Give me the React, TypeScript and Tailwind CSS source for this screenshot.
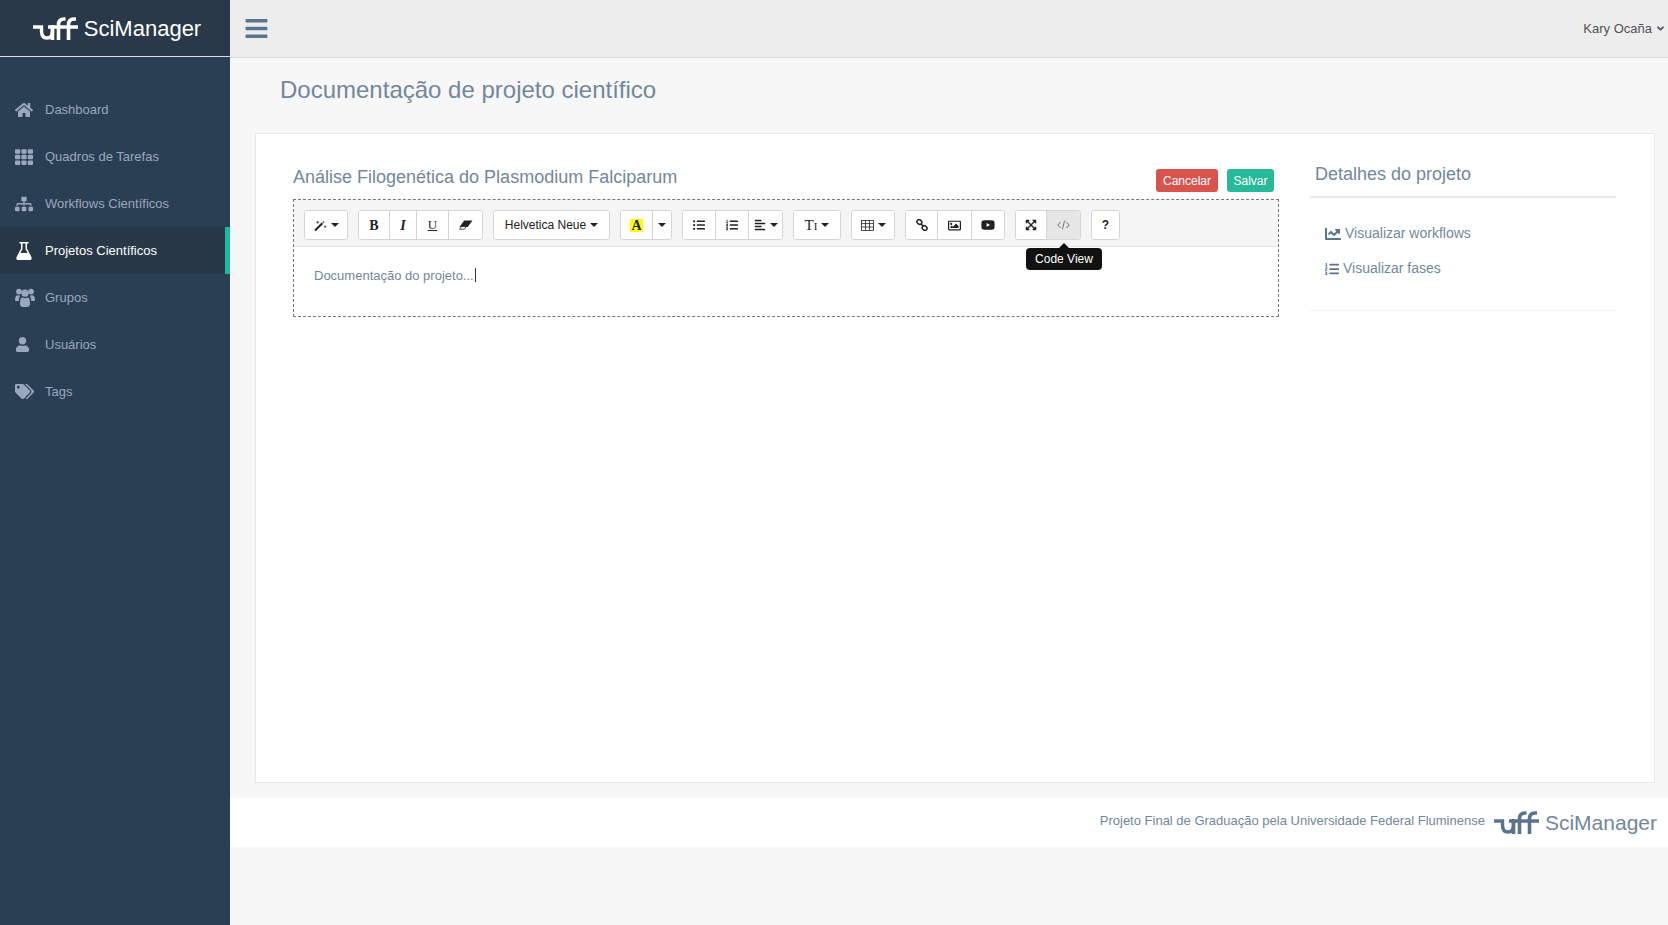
import React from 'react';
import {
  FaHome, FaTh, FaSitemap, FaUser, FaTags, FaBars, FaChartLine, FaListOl, FaListUl,
  FaAlignLeft, FaRegImage, FaYoutube, FaExpandArrowsAlt, FaAngleDown,
} from 'react-icons/fa';

const UffLogo = ({ className }: { className: string }) => (
  <svg viewBox="0 0 45 23" className={className} fill="none" stroke="currentColor" strokeWidth="3.6">
    <path d="M0 10H8.5V14C8.5 18.5 10.5 21 14 21C17.5 21 19.5 18.5 19.5 14V8M15 10H45" strokeWidth="3.4" />
    <path d="M19.5 8V23M25.5 23V8C25.5 3.8 27.5 2 31 2H32.5M35.5 23V8C35.5 3.8 37.5 2 41 2H43" />
  </svg>
);

const FlaskIcon = ({ className }: { className?: string }) => (
  <svg viewBox="0 0 16 18" className={className} fill="currentColor">
    <path d="M3.5 0H12.5V1.6H11V6.5L15.5 15.2C16.2 16.6 15.3 18 13.8 18H2.2C0.7 18 -0.2 16.6 0.5 15.2L5 6.5V1.6H3.5ZM6.5 1.6V7L4.4 11H11.6L9.5 7V1.6Z" fillRule="evenodd" />
  </svg>
);

const UsersIcon = ({ className }: { className?: string }) => (
  <svg viewBox="0 0 20 19" className={className} fill="currentColor">
    <circle cx="4" cy="3.6" r="2.9" />
    <circle cx="16" cy="3.6" r="2.9" />
    <circle cx="10" cy="5.2" r="3.6" />
    <path d="M0 12C0 8.8 1 7.2 3 7.2C4 7.2 4.6 7.6 5.2 8C4.2 9.4 3.8 11 3.8 13H1.5C0.5 13 0 12.7 0 12Z" />
    <path d="M20 12C20 8.8 19 7.2 17 7.2C16 7.2 15.4 7.6 14.8 8C15.8 9.4 16.2 11 16.2 13H18.5C19.5 13 20 12.7 20 12Z" />
    <path d="M5 16C5 12 5.6 9.6 7.2 9.2C8 9.9 9 10.2 10 10.2C11 10.2 12 9.9 12.8 9.2C14.4 9.6 15 12 15 16C15 18 13.8 19 12.2 19H7.8C6.2 19 5 18 5 16Z" />
  </svg>
);

const WandIcon = () => (
  <svg viewBox="0 0 14 12" className="h-[11px] w-[13px]" fill="none" stroke="#222">
    <path d="M1 11.5L9 3.5" strokeWidth="2.2" />
    <path d="M9 3.5L11 1.5" strokeWidth="1.6" stroke="#888" />
    <path d="M4 1V4M2.5 2.5H5.5M12 6V8.5M10.8 7.2H13.2" strokeWidth="0.8" />
  </svg>
);

const EraserIcon = () => (
  <svg viewBox="0 0 14 10" className="h-[10px] w-[14px]" fill="#222">
    <path d="M5.2 0.5H13.5L8.6 7H0.5Z" />
    <path d="M2.6 6.5H7.2L5.4 9.2H0.6Z" fill="#fff" stroke="#222" strokeWidth="0.8" />
  </svg>
);

const TableIcon = () => (
  <svg viewBox="0 0 13 11" className="h-[11px] w-[13px]" fill="none" stroke="#222" strokeWidth="0.8">
    <rect x="0.5" y="0.5" width="12" height="10" />
    <path d="M0.5 3.6H12.5M0.5 7H12.5M4.5 0.5V10.5M8.5 0.5V10.5" />
  </svg>
);

const LinkIcon = () => (
  <svg viewBox="0 0 12 12" className="h-[12px] w-[12px]" fill="none" stroke="#222" strokeWidth="1.5">
    <rect x="0.9" y="0.9" width="5" height="4.2" rx="2" transform="rotate(40 3.4 3)" />
    <rect x="6.1" y="6.9" width="5" height="4.2" rx="2" transform="rotate(40 8.6 9)" />
    <path d="M5 4.6L7 7.2" />
  </svg>
);

const CodeIcon = () => (
  <svg viewBox="0 0 13 10" className="h-[10px] w-[13px]" fill="none" stroke="#666" strokeWidth="0.9">
    <path d="M3.6 2L0.8 5L3.6 8M9.4 2L12.2 5L9.4 8M7.6 0.6L5.4 9.4" />
  </svg>
);

const menu = [
  { label: 'Dashboard', icon: <FaHome className="text-[18px]" /> },
  { label: 'Quadros de Tarefas', icon: <FaTh className="text-[18px]" /> },
  { label: 'Workflows Científicos', icon: <FaSitemap className="text-[18px]" /> },
  { label: 'Projetos Científicos', icon: <FlaskIcon className="ml-px h-[18px] w-[16px]" />, active: true },
  { label: 'Grupos', icon: <UsersIcon className="h-[19px] w-[20px]" /> },
  { label: 'Usuários', icon: <FaUser className="text-[15px]" /> },
  { label: 'Tags', icon: <FaTags className="text-[19px]" /> },
];

const Caret = () => (
  <span className="inline-block h-0 w-0 border-x-[4px] border-t-[4px] border-x-transparent border-t-[#222]" />
);

const Btn = ({ w, children, active, last }: { w: string; children: React.ReactNode; active?: boolean; last?: boolean }) => (
  <div className={`${w} flex h-full items-center justify-center gap-1 ${last ? '' : 'border-r border-[#d5d5d5]'} ${active ? 'bg-[#e6e6e6]' : 'bg-white'}`}>
    {children}
  </div>
);

const Group = ({ children }: { children: React.ReactNode }) => (
  <div className="flex h-[30px] overflow-hidden rounded-[3px] border border-[#d5d5d5] bg-white text-[#222]">{children}</div>
);

const Toolbar = () => (
  <div className="flex h-[47px] items-start gap-[10px] border-b border-[#e5e5e5] bg-[#f5f5f5] pt-[10px] pl-[10px]">
    <Group>
      <Btn w="w-[42px]" last><WandIcon /><Caret /></Btn>
    </Group>
    <Group>
      <Btn w="w-[31px]"><span className="font-['Liberation_Serif',serif] text-[14px] font-bold">B</span></Btn>
      <Btn w="w-[27px]"><span className="font-['Liberation_Serif',serif] text-[14px] font-bold italic">I</span></Btn>
      <Btn w="w-[32px]"><span className="font-['Liberation_Serif',serif] text-[13px] underline">U</span></Btn>
      <Btn w="w-[33px]" last><EraserIcon /></Btn>
    </Group>
    <Group>
      <Btn w="w-[115px]" last><span className="text-[12px]">Helvetica Neue</span><Caret /></Btn>
    </Group>
    <Group>
      <Btn w="w-[32px]"><span className="bg-[#ffff00] px-[1px] font-['Liberation_Serif',serif] text-[14px] leading-[13px] font-bold">A</span></Btn>
      <Btn w="w-[18px]" last><Caret /></Btn>
    </Group>
    <Group>
      <Btn w="w-[33px]"><FaListUl className="text-[12px]" /></Btn>
      <Btn w="w-[33px]"><FaListOl className="text-[12px]" /></Btn>
      <Btn w="w-[33px]" last><FaAlignLeft className="text-[12px]" /><Caret /></Btn>
    </Group>
    <Group>
      <Btn w="w-[46px]" last><span className="font-['Liberation_Serif',serif] text-[15px]">T<span className="text-[11px]">I</span></span><Caret /></Btn>
    </Group>
    <Group>
      <Btn w="w-[42px]" last><TableIcon /><Caret /></Btn>
    </Group>
    <Group>
      <Btn w="w-[32px]"><LinkIcon /></Btn>
      <Btn w="w-[34px]"><FaRegImage className="text-[13px]" /></Btn>
      <Btn w="w-[32px]" last><FaYoutube className="text-[14px]" /></Btn>
    </Group>
    <Group>
      <Btn w="w-[31px]"><FaExpandArrowsAlt className="text-[12px]" /></Btn>
      <Btn w="w-[33px]" active last><CodeIcon /></Btn>
    </Group>
    <Group>
      <Btn w="w-[27px]" last><span className="text-[12px] font-bold">?</span></Btn>
    </Group>
  </div>
);

export default function App() {
  return (
    <div className="flex min-h-[925px] bg-[#f7f7f7] font-['Liberation_Sans',sans-serif] text-[#73879c]">
      <aside className="w-[230px] shrink-0 bg-[#2a3f54]">
        <div className="flex h-[57px] items-center justify-center gap-[6px] border-b border-[#d9dee4] bg-[#293949] pl-[4px] text-white">
          <UffLogo className="h-[23px] w-[45px]" />
          <span className="text-[22px]">SciManager</span>
        </div>
        <nav className="pt-[29px]">
          {menu.map((item) => (
            <div
              key={item.label}
              className={`flex h-[47px] items-center text-[13px] ${item.active ? 'border-r-[5px] border-[#1abb9c] bg-[#293846] text-white' : 'text-[#99a8bc]'}`}
            >
              <span className="flex w-[45px] justify-start pl-[15px]">{item.icon}</span>
              {item.label}
            </div>
          ))}
        </nav>
      </aside>

      <div className="min-w-0 flex-1">
        <header className="flex h-[58px] items-center justify-between border-b border-[#d9dee4] bg-[#ededed] pr-[2px] pl-[14px]">
          <FaBars className="text-[25px] text-[#5a738e]" />
          <div className="flex items-center gap-[3px] text-[13px] text-[#515356]">
            Kary Ocaña
            <FaAngleDown className="text-[11px]" />
          </div>
        </header>

        <main className="pt-[16px] pr-[13px] pl-[25px]">
          <h1 className="pl-[25px] text-[24px] leading-[32px]">Documentação de projeto científico</h1>
          <section className="mt-[27px] flex h-[650px] border border-[#e6e9ed] bg-white pt-[30px] pr-[38px] pl-[37px]">
            <div className="w-[986px] shrink-0">
              <div className="flex h-[35px] items-start justify-between pr-[5px]">
                <h2 className="text-[18px] leading-[26px]">Análise Filogenética do Plasmodium Falciparum</h2>
                <div className="mt-[5px] flex gap-[9px]">
                  <button className="h-[23px] w-[62px] rounded-[3px] bg-[#d9534f] text-[12px] text-white">Cancelar</button>
                  <button className="h-[23px] w-[47px] rounded-[3px] bg-[#26b99a] text-[12px] text-white">Salvar</button>
                </div>
              </div>
              <div className="relative h-[118px] border border-dashed border-[#777] bg-white">
                <Toolbar />
                <div className="pt-[19px] pl-[20px] text-[13px] leading-[18px]">
                  Documentação do projeto...<span className="ml-[1px] inline-block h-[14px] w-px translate-y-[2px] bg-[#333]" />
                </div>
                <div className="absolute top-[43px] left-[732px] flex flex-col items-center">
                  <div className="h-0 w-0 border-x-[5px] border-b-[5px] border-x-transparent border-b-[#111]" />
                  <div className="flex h-[22px] w-[76px] items-center justify-center rounded-[4px] bg-[#111] text-[12px] text-white">Code View</div>
                </div>
              </div>
            </div>
            <div className="ml-[31px] flex-1">
              <h3 className="-mt-[3px] border-b-2 border-[#e6e9ed] pb-[9px] pl-[5px] text-[18px] leading-[26px]">Detalhes do projeto</h3>
              <ul className="border-b border-[#f3f4f6] pt-[18px] pb-[24px] pl-[15px] text-[14px]">
                <li className="flex h-[35px] items-center gap-[4px]"><FaChartLine className="text-[16px] text-[#5a738e]" />Visualizar workflows</li>
                <li className="flex h-[35px] items-center gap-[4px]"><FaListOl className="text-[14px] text-[#5a738e]" />Visualizar fases</li>
              </ul>
            </div>
          </section>
        </main>

        <footer className="mt-[15px] flex h-[49px] items-center justify-end bg-white pr-[11px] text-[13px]">
          <span className="mb-[4px]">Projeto Final de Graduação pela Universidade Federal Fluminense</span>
          <UffLogo className="mr-[6px] ml-[9px] h-[23px] w-[45px] text-[#5a738e]" />
          <span className="text-[21px]">SciManager</span>
        </footer>
      </div>
    </div>
  );
}
